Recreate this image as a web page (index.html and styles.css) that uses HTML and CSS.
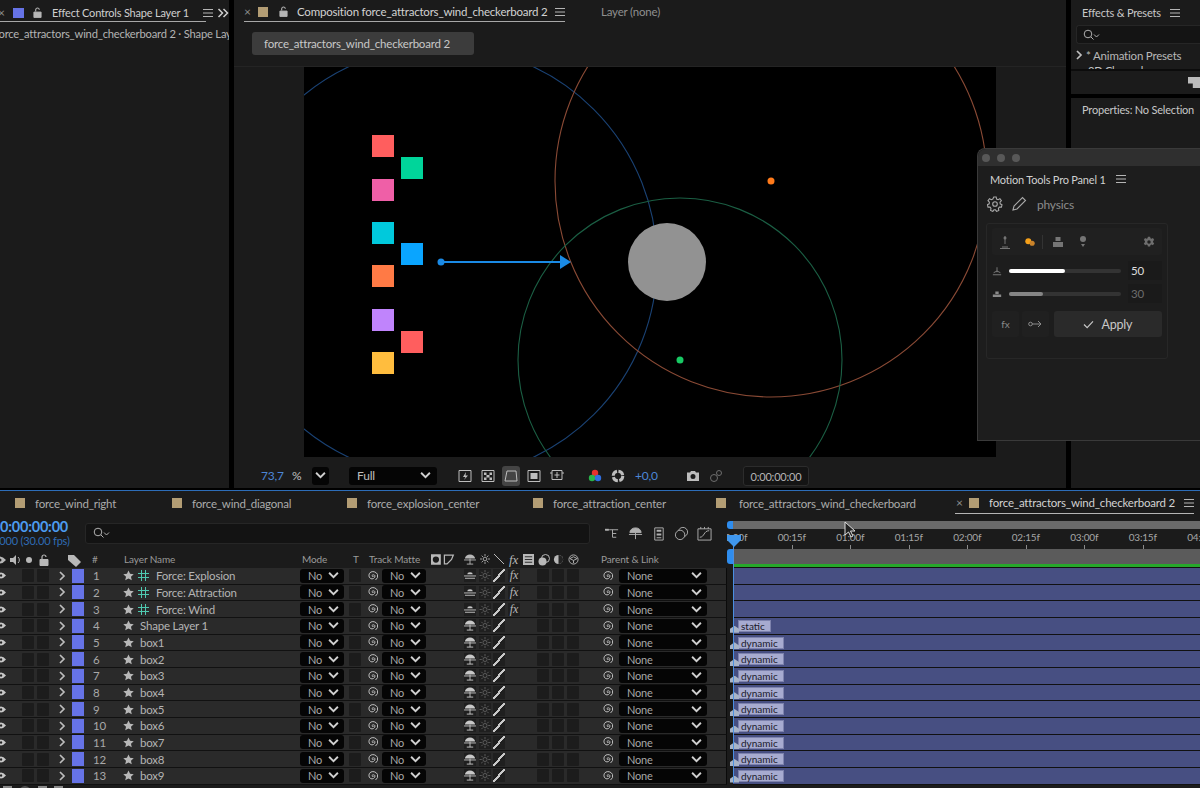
FILE: index.html
```html
<!DOCTYPE html>
<html lang="en">
  <head>
    <meta charset="UTF-8" />
    <title>force_attractors_wind_checkerboard 2</title>
    <link rel="stylesheet" href="styles.css">
  </head>
  <body>
    <svg class="defs" width="0" height="0">
      <symbol id="burger" viewBox="0 0 10 10"><path d="M0 1.500h10M0 5h10M0 8.500h10" stroke="currentColor" fill="none"/></symbol>
      <symbol id="lock" viewBox="0 0 10 12"><path d="M1 5.500h8v6H1z" fill="currentColor" stroke="currentColor"/><path d="M3 5V3a2 2 0 0 1 4 0" fill="none" stroke="currentColor" stroke-width="1.200"/></symbol>
      <symbol id="chev" viewBox="0 0 10 10"><path d="M1 2.500l4 4 4-4" stroke="currentColor" stroke-width="1.700" fill="none"/></symbol>
      <symbol id="chevr" viewBox="0 0 10 10"><path d="M3 1l4 4-4 4" stroke="currentColor" stroke-width="1.700" fill="none"/></symbol>
      <symbol id="dbl" viewBox="0 0 12 10"><path d="M1.500 1l4 4-4 4M6.500 1l4 4-4 4" stroke="currentColor" stroke-width="1.500" fill="none"/></symbol>
      <symbol id="search" viewBox="0 0 18 12"><circle cx="5" cy="5" r="3.800" stroke="currentColor" fill="none"/><path d="M8 8l2.500 2.500M11 5.500l2.500 2.500 2.500-2.500" stroke="currentColor" fill="none"/></symbol>
      <symbol id="eye" viewBox="0 0 12 8"><path d="M0 4q6-7 12 0q-6 7-12 0z" fill="currentColor"/><circle cx="6" cy="4" r="1.500" fill="#222"/></symbol>
      <symbol id="star" viewBox="0 0 12 12"><path d="M6 .5l1.700 3.700 4 .4-3 2.700.9 4L6 9.300 2.400 11.300l.9-4-3-2.700 4-.4z" fill="currentColor"/></symbol>
      <symbol id="hash" viewBox="0 0 11 11"><path d="M3.500 0v11M7.500 0v11M0 3.500h11M0 7.500h11" stroke="currentColor" fill="none"/></symbol>
      <symbol id="spiral" viewBox="0 0 12 12"><path d="M6.500 6.500a1 1 0 0 1-1.500-1a1.800 1.800 0 0 1 3 .3a3 3 0 0 1-4.500 2.700a3.800 3.800 0 0 1 .5-6.500a5 5 0 0 1 6.500 2.500a5 5 0 0 1-2 5.500" stroke="currentColor" fill="none"/></symbol>
      <symbol id="shy" viewBox="0 0 13 12"><path d="M0 6.500h13M6.500 5v6M3 11h7" stroke="currentColor" fill="none"/><path d="M1 5a5.500 4.500 0 0 1 11 0z" fill="currentColor"/></symbol>
      <symbol id="flat" viewBox="0 0 13 12"><path d="M3.500 4.500a3 2 0 0 1 6 0z" fill="currentColor"/><path d="M0 6.500h13M1 9h11" stroke="currentColor" fill="none"/></symbol>
      <symbol id="sun" viewBox="0 0 12 12"><circle cx="6" cy="6" r="2.200" fill="none" stroke="currentColor"/><path d="M6 0v2.500M6 9.500V12M0 6h2.500M9.500 6H12M2 2l1.700 1.700M8.300 8.300L10 10M2 10l1.700-1.700M8.300 3.700L10 2" stroke="currentColor" fill="none"/></symbol>
      <symbol id="gear" viewBox="0 0 16 16"><path d="M6.800 1h2.400l.4 2 1.500.7 1.800-1 1.500 2-1.400 1.500.2 1.600 1.800.9-.6 2.400-2 0-1 1.300.4 2-2.200 1-1.200-1.600H7l-1.200 1.600-2.200-1 .4-2-1-1.300-2 0-.6-2.400 1.800-.9.200-1.600L1 4.700l1.500-2 1.800 1 1.500-.7z" fill="none" stroke="currentColor" stroke-width="1.100"/><circle cx="8" cy="8" r="2.300" fill="none" stroke="currentColor" stroke-width="1.100"/></symbol>
      <symbol id="solid-gear" viewBox="0 0 16 16"><path fill-rule="evenodd" d="M6.500 1h3l.4 2 1.600.8 1.800-1 1.600 2.500-1.500 1.300v1.800l1.500 1.300-1.600 2.500-1.800-1-1.600.8-.4 2h-3l-.4-2-1.600-.8-1.800 1-1.600-2.500 1.500-1.300V6.600L1.100 5.300l1.600-2.500 1.800 1 1.600-.8zM8 5.700a2.300 2.300 0 1 0 0 4.600 2.300 2.300 0 0 0 0-4.600z" fill="currentColor"/></symbol>
    </svg>

    <main class="top">
      <section class="panel left">
        <header class="tab-head left-head">
          <span class="close">×</span>
          <i class="swatch swatch-blue"></i>
          <svg class="lock"><use href="#lock"/></svg>
          <span class="tab-title">Effect Controls Shape Layer 1</span>
          <svg class="burger"><use href="#burger"/></svg>
          <svg class="more"><use href="#dbl"/></svg>
        </header>
        <div class="left-sub">force_attractors_wind_checkerboard 2 · Shape Layer 1</div>
      </section>

      <section class="panel comp">
        <header class="tab-head comp-head">
          <span class="comp-tab">
            <span class="close">×</span>
            <i class="swatch swatch-tan"></i>
            <svg class="lock"><use href="#lock"/></svg>
            <span class="tab-title">Composition force_attractors_wind_checkerboard 2</span>
            <svg class="burger"><use href="#burger"/></svg>
          </span>
          <span class="layer-none">Layer (none)</span>
        </header>
        <div class="pill-row"><span class="pill">force_attractors_wind_checkerboard 2</span></div>
        <div class="viewer">
          <svg class="canvas" viewBox="0 0 692 390" width="692" height="390">
            <circle cx="137" cy="195" r="216" fill="none" stroke="#1a4274" stroke-width="1.100"/>
            <circle cx="467" cy="114" r="216" fill="none" stroke="#8a4a35" stroke-width="1.100"/>
            <circle cx="376" cy="293" r="162" fill="none" stroke="#1b5f44" stroke-width="1.100"/>
            <circle cx="363" cy="195" r="39" fill="#929292"/>
            <path d="M137 195H258" stroke="#1a8ae5" stroke-width="2"/>
            <path d="M256 188l11 7-11 7z" fill="#1a8ae5"/>
            <circle cx="137" cy="195" r="3.500" fill="#1a8ae5"/>
            <circle cx="467" cy="114" r="3.500" fill="#ff7a1a"/>
            <circle cx="376" cy="293" r="3.500" fill="#18c964"/>
            <rect x="68" y="68" width="22" height="22" fill="#ff5e5e"/>
            <rect x="97" y="90" width="22" height="22" fill="#00d59a"/>
            <rect x="68" y="112" width="22" height="22" fill="#ef5fa7"/>
            <rect x="68" y="155" width="22" height="22" fill="#00c9dc"/>
            <rect x="97" y="176" width="22" height="22" fill="#0aa5ff"/>
            <rect x="68" y="198" width="22" height="22" fill="#ff7a45"/>
            <rect x="68" y="242" width="22" height="22" fill="#c084fc"/>
            <rect x="97" y="264" width="22" height="22" fill="#ff5e5e"/>
            <rect x="68" y="285" width="22" height="22" fill="#ffbd3e"/>
          </svg>
        </div>
        <footer class="viewer-bar">
          <span class="zoom-val">73,7</span>
          <span class="zoom-pct">%</span>
          <span class="mini-sel"><svg class="chev"><use href="#chev"/></svg></span>
          <span class="res-sel">Full<svg class="chev"><use href="#chev"/></svg></span>
          <span class="bar-icons">
            <svg class="bar-ic" viewBox="0 0 14 14"><path d="M1 1.500h12v11H1z" fill="none" stroke="currentColor"/><path d="M8 3L5 8h2.500L6 11l4-4.500H7.500z" fill="currentColor"/></svg>
            <svg class="bar-ic" viewBox="0 0 14 14"><path d="M1 1.500h12v11H1z" fill="none" stroke="currentColor"/><path d="M3 3.500h2.500V6H3zM8.500 3.500H11V6H8.500zM5.500 6H8.500v2.500H5.500zM3 8.500h2.500V11H3zM8.500 8.500H11V11H8.500z" fill="currentColor"/></svg>
            <span class="bar-active"><svg class="bar-ic" viewBox="0 0 14 14"><path d="M3 2h9l1 10H1z" fill="none" stroke="currentColor"/></svg></span>
            <svg class="bar-ic" viewBox="0 0 14 14"><path d="M1 1.500h12v11H1z" fill="none" stroke="currentColor"/><path d="M3.500 4h7v6h-7z" fill="currentColor"/></svg>
            <svg class="bar-ic" viewBox="0 0 14 14"><path d="M2 1.500h10v9H2zM7 3v6M4.500 6h5M0 4h2M12 4h2" fill="none" stroke="currentColor"/></svg>
          </span>
          <svg class="rgb" viewBox="0 0 14 14"><circle cx="7" cy="4" r="3.200" fill="#e5322d"/><circle cx="4" cy="9" r="3.200" fill="#29b34a"/><circle cx="10" cy="9" r="3.200" fill="#2f6fe0"/></svg>
          <svg class="bar-ic aperture" viewBox="0 0 14 14"><circle cx="7" cy="7" r="4.800" fill="none" stroke="currentColor" stroke-width="3" stroke-dasharray="6 1.500"/></svg>
          <span class="exposure">+0,0</span>
          <svg class="bar-ic camera" viewBox="0 0 14 14"><path fill-rule="evenodd" d="M1 3.500h3l1-1.500h4l1 1.500h3V12H1zM7 5a2.500 2.500 0 1 0 0 5 2.500 2.500 0 0 0 0-5z" fill="currentColor"/></svg>
          <svg class="bar-ic snapshot" viewBox="0 0 14 14"><circle cx="5" cy="9" r="3.500" fill="none" stroke="currentColor"/><circle cx="10" cy="4" r="2.500" fill="none" stroke="currentColor"/></svg>
          <span class="timecode">0:00:00:00</span>
        </footer>
      </section>

      <aside class="right">
        <section class="panel effects">
          <header class="fx-head">Effects &amp; Presets<svg class="burger"><use href="#burger"/></svg></header>
          <div class="fx-search"><svg class="search-ic"><use href="#search"/></svg></div>
          <div class="fx-item"><svg class="chevr"><use href="#chevr"/></svg>* Animation Presets</div>
          <div class="fx-clip"><span>3D Channel</span></div>
          <div class="fx-foot"><i class="fx-new"></i></div>
        </section>
        <section class="panel props">Properties: No Selection</section>
      </aside>
    </main>

    <aside class="float">
      <div class="float-bar"><i></i><i></i><i></i></div>
      <div class="float-title">Motion Tools Pro Panel 1<svg class="burger"><use href="#burger"/></svg></div>
      <div class="float-tools">
        <svg class="tool-ic"><use href="#gear"/></svg>
        <svg class="tool-ic" viewBox="0 0 16 16"><path d="M2 14l1-4L11.500 1.500l3 3L6 13z" fill="none" stroke="currentColor" stroke-width="1.100"/></svg>
        <span class="physics">physics</span>
      </div>
      <div class="phys-box">
        <div class="phys-bar">
          <svg class="phys-ic" viewBox="0 0 12 14"><path d="M6 1v8M3 12h6M1 13.500h10" stroke="currentColor" fill="none"/><circle cx="6" cy="3" r="1.500" fill="currentColor"/></svg>
          <svg class="phys-ic phys-on" viewBox="0 0 14 14"><circle cx="5" cy="6" r="3.500" fill="#f5a019"/><circle cx="9.500" cy="8.500" r="3" fill="#c9822a"/></svg>
          <i class="phys-sep"></i>
          <svg class="phys-ic" viewBox="0 0 12 14"><path d="M3.500 2h5v4h-5zM1 7h10v5H1z" fill="currentColor"/></svg>
          <svg class="phys-ic" viewBox="0 0 12 14"><circle cx="6" cy="4" r="3" fill="currentColor"/><path d="M4 9h4l-2 3z" fill="currentColor"/></svg>
          <svg class="phys-gear"><use href="#solid-gear"/></svg>
        </div>
        <div class="slider">
          <svg class="slide-ic" viewBox="0 0 12 12"><path d="M6 1.500v6M2 8l4-2 4 2M1 10.500h10" stroke="currentColor" fill="none"/></svg>
          <span class="track"><b class="fill fill-on"></b></span>
          <span class="val">50</span>
        </div>
        <div class="slider slider-off">
          <svg class="slide-ic" viewBox="0 0 12 12"><path d="M4 3h4v3H4zM1 6.500h10v3H1z" fill="currentColor"/></svg>
          <span class="track"><b class="fill fill-off"></b></span>
          <span class="val">30</span>
        </div>
        <div class="phys-actions">
          <span class="act">fx</span>
          <span class="act"><svg class="act-ic" viewBox="0 0 14 10"><circle cx="2.500" cy="5" r="1.800" fill="none" stroke="currentColor"/><path d="M4 5h9M10 2l3 3-3 3" stroke="currentColor" fill="none"/></svg></span>
          <span class="apply"><svg class="apply-ic" viewBox="0 0 12 10"><path d="M1 5l3.500 3.500L11 1.500" stroke="currentColor" stroke-width="1.300" fill="none"/></svg>Apply</span>
        </div>
      </div>
    </aside>

    <section class="timeline">
      <nav class="tl-tabs">
        <span class="tl-tab tab-1"><i class="swatch swatch-tan"></i>force_wind_right</span>
        <span class="tl-tab tab-2"><i class="swatch swatch-tan"></i>force_wind_diagonal</span>
        <span class="tl-tab tab-3"><i class="swatch swatch-tan"></i>force_explosion_center</span>
        <span class="tl-tab tab-4"><i class="swatch swatch-tan"></i>force_attraction_center</span>
        <span class="tl-tab tab-5"><i class="swatch swatch-tan"></i>force_attractors_wind_checkerboard</span>
        <span class="tl-tab tab-on"><span class="close">×</span><i class="swatch swatch-tan"></i>force_attractors_wind_checkerboard 2<svg class="burger"><use href="#burger"/></svg></span>
      </nav>

      <div class="tl-head">
        <div class="tl-head-left">
          <div class="time-row">
            <div class="time-box"><b>0:00:00:00</b><small>00000 (30.00 fps)</small></div>
            <div class="tl-search"><svg class="search-ic"><use href="#search"/></svg></div>
            <div class="time-icons">
              <svg class="time-ic" viewBox="0 0 16 16"><path d="M1 4h4M5 4h9M8 4v8h4M8 8h4" stroke="currentColor" fill="none"/><rect x="0" y="3" width="4" height="2" fill="currentColor"/></svg>
              <svg class="time-ic" viewBox="0 0 16 16"><path d="M2 7a6 5 0 0 1 12 0zM1 9h14M8 7v7" stroke="currentColor" fill="currentColor"/></svg>
              <svg class="time-ic" viewBox="0 0 16 16"><path d="M4 2h9v13H4z" fill="none" stroke="currentColor"/><path d="M6 4h5v2H6zM6 8h5v2H6zM6 12h5v1H6z" fill="currentColor"/></svg>
              <svg class="time-ic" viewBox="0 0 16 16"><circle cx="9.500" cy="6.500" r="5" fill="none" stroke="currentColor"/><circle cx="6.500" cy="9.500" r="5" fill="#1b1b1b" stroke="currentColor"/></svg>
              <svg class="time-ic" viewBox="0 0 16 16"><path d="M1 3h14v12H1zM4 1v2M8 1v2M12 1v2M3 12c5 0 4-7 10-7" fill="none" stroke="currentColor"/></svg>
            </div>
          </div>
          <div class="col-head">
            <svg class="ch-eye"><use href="#eye"/></svg>
            <svg class="ch-spk" viewBox="0 0 12 12"><path d="M1 4h3l3-3v10L4 8H1z" fill="currentColor"/><path d="M9 3a4 4 0 0 1 0 6" stroke="currentColor" fill="none"/></svg>
            <i class="ch-dot"></i>
            <svg class="ch-lock"><use href="#lock"/></svg>
            <svg class="ch-tag" viewBox="0 0 13 13"><path d="M0 1h6l7 7-5 5-8-7z" fill="currentColor"/></svg>
            <span class="ch-num">#</span>
            <span class="ch-name">Layer Name</span>
            <span class="ch-mode">Mode</span>
            <span class="ch-t">T</span>
            <span class="ch-tm">Track Matte</span>
            <svg class="ch-sw" viewBox="0 0 28 12"><path fill-rule="evenodd" d="M0 0h11v12H0zM5.500 2.500a3.500 3.500 0 1 0 0 7 3.500 3.500 0 0 0 0-7z" fill="currentColor"/><path d="M15 1h10l-2 5-5 5h-3z" fill="none" stroke="currentColor" stroke-width="1.400"/></svg>
            <svg class="ch-sw2"><use href="#shy"/></svg>
            <svg class="ch-sw3"><use href="#sun"/></svg>
            <svg class="ch-sw4" viewBox="0 0 10 10"><path d="M0 0l10 10" stroke="currentColor" fill="none"/></svg>
            <em class="ch-fx">fx</em>
            <svg class="ch-sw5" viewBox="0 0 12 12"><path d="M0 0h12v12H0z" fill="currentColor"/><path d="M2 3h8M2 6h8M2 9h8" stroke="#222"/></svg>
            <svg class="ch-sw6" viewBox="0 0 12 12"><circle cx="7.500" cy="4.500" r="4" fill="none" stroke="currentColor"/><circle cx="4.500" cy="7.500" r="4" fill="currentColor"/></svg>
            <svg class="ch-sw7" viewBox="0 0 12 12"><circle cx="6" cy="6" r="5" fill="currentColor"/><path d="M6 1a5 5 0 0 1 0 10z" fill="#222"/></svg>
            <svg class="ch-sw8" viewBox="0 0 12 12"><circle cx="6" cy="6" r="5" fill="none" stroke="currentColor"/><path d="M2 5l4-2 4 2-4 2zM6 7v3" stroke="currentColor" fill="none"/></svg>
            <span class="ch-parent">Parent &amp; Link</span>
          </div>
        </div>
        <div class="tl-head-right">
          <div class="nav-bar"></div>
          <div class="ruler">
            <span>00:00f</span><span>00:15f</span><span>01:00f</span><span>01:15f</span><span>02:00f</span><span>02:15f</span><span>03:00f</span><span>03:15f</span><span>04:00f</span>
          </div>
          <div class="work-bar"></div>
          <div class="green-line"></div>
        </div>
      </div>

      <div class="rows">
        <div class="row">
          <div class="row-left"><svg class="eye"><use href="#eye"/></svg><i class="cell c-a"></i><i class="cell c-b"></i><svg class="tw"><use href="#chevr"/></svg><i class="label"></i><span class="num">1</span><svg class="star"><use href="#star"/></svg><svg class="hash"><use href="#hash"/></svg><span class="name">Force: Explosion</span>
            <span class="sel sel-mode">No<svg class="chev"><use href="#chev"/></svg></span><i class="cell c-t"></i><svg class="spiral s-tm"><use href="#spiral"/></svg><span class="sel sel-tm">No<svg class="chev"><use href="#chev"/></svg></span>
            <i class="sw sw-1"><svg><use href="#flat"/></svg></i><i class="sw dim"><svg><use href="#sun"/></svg></i><i class="sw slash"></i><em class="sw fx">fx</em><i class="cell c-1"></i><i class="cell c-2"></i><i class="cell c-3"></i><svg class="spiral s-par"><use href="#spiral"/></svg><span class="sel sel-par">None<svg class="chev"><use href="#chev"/></svg></span></div>
          <div class="row-bar"></div>
        </div>
        <div class="row">
          <div class="row-left"><svg class="eye"><use href="#eye"/></svg><i class="cell c-a"></i><i class="cell c-b"></i><svg class="tw"><use href="#chevr"/></svg><i class="label"></i><span class="num">2</span><svg class="star"><use href="#star"/></svg><svg class="hash"><use href="#hash"/></svg><span class="name">Force: Attraction</span>
            <span class="sel sel-mode">No<svg class="chev"><use href="#chev"/></svg></span><i class="cell c-t"></i><svg class="spiral s-tm"><use href="#spiral"/></svg><span class="sel sel-tm">No<svg class="chev"><use href="#chev"/></svg></span>
            <i class="sw sw-1"><svg><use href="#flat"/></svg></i><i class="sw dim"><svg><use href="#sun"/></svg></i><i class="sw slash"></i><em class="sw fx">fx</em><i class="cell c-1"></i><i class="cell c-2"></i><i class="cell c-3"></i><svg class="spiral s-par"><use href="#spiral"/></svg><span class="sel sel-par">None<svg class="chev"><use href="#chev"/></svg></span></div>
          <div class="row-bar"></div>
        </div>
        <div class="row">
          <div class="row-left"><svg class="eye"><use href="#eye"/></svg><i class="cell c-a"></i><i class="cell c-b"></i><svg class="tw"><use href="#chevr"/></svg><i class="label"></i><span class="num">3</span><svg class="star"><use href="#star"/></svg><svg class="hash"><use href="#hash"/></svg><span class="name">Force: Wind</span>
            <span class="sel sel-mode">No<svg class="chev"><use href="#chev"/></svg></span><i class="cell c-t"></i><svg class="spiral s-tm"><use href="#spiral"/></svg><span class="sel sel-tm">No<svg class="chev"><use href="#chev"/></svg></span>
            <i class="sw sw-1"><svg><use href="#flat"/></svg></i><i class="sw dim"><svg><use href="#sun"/></svg></i><i class="sw slash"></i><em class="sw fx">fx</em><i class="cell c-1"></i><i class="cell c-2"></i><i class="cell c-3"></i><svg class="spiral s-par"><use href="#spiral"/></svg><span class="sel sel-par">None<svg class="chev"><use href="#chev"/></svg></span></div>
          <div class="row-bar"></div>
        </div>
        <div class="row">
          <div class="row-left"><svg class="eye"><use href="#eye"/></svg><i class="cell c-a"></i><i class="cell c-b"></i><svg class="tw"><use href="#chevr"/></svg><i class="label"></i><span class="num">4</span><svg class="star"><use href="#star"/></svg><span class="name name-plain">Shape Layer 1</span>
            <span class="sel sel-mode">No<svg class="chev"><use href="#chev"/></svg></span><i class="cell c-t"></i><svg class="spiral s-tm"><use href="#spiral"/></svg><span class="sel sel-tm">No<svg class="chev"><use href="#chev"/></svg></span>
            <i class="sw sw-1"><svg><use href="#shy"/></svg></i><i class="sw dim"><svg><use href="#sun"/></svg></i><i class="sw slash"></i><i class="sw none"></i><i class="cell c-1"></i><i class="cell c-2"></i><i class="cell c-3"></i><svg class="spiral s-par"><use href="#spiral"/></svg><span class="sel sel-par">None<svg class="chev"><use href="#chev"/></svg></span></div>
          <div class="row-bar"><span class="marker">static</span><i class="key"></i></div>
        </div>
        <div class="row">
          <div class="row-left"><svg class="eye"><use href="#eye"/></svg><i class="cell c-a"></i><i class="cell c-b"></i><svg class="tw"><use href="#chevr"/></svg><i class="label"></i><span class="num">5</span><svg class="star"><use href="#star"/></svg><span class="name name-plain">box1</span>
            <span class="sel sel-mode">No<svg class="chev"><use href="#chev"/></svg></span><i class="cell c-t"></i><svg class="spiral s-tm"><use href="#spiral"/></svg><span class="sel sel-tm">No<svg class="chev"><use href="#chev"/></svg></span>
            <i class="sw sw-1"><svg><use href="#shy"/></svg></i><i class="sw dim"><svg><use href="#sun"/></svg></i><i class="sw slash"></i><i class="sw none"></i><i class="cell c-1"></i><i class="cell c-2"></i><i class="cell c-3"></i><svg class="spiral s-par"><use href="#spiral"/></svg><span class="sel sel-par">None<svg class="chev"><use href="#chev"/></svg></span></div>
          <div class="row-bar"><span class="marker">dynamic</span><i class="key"></i></div>
        </div>
        <div class="row">
          <div class="row-left"><svg class="eye"><use href="#eye"/></svg><i class="cell c-a"></i><i class="cell c-b"></i><svg class="tw"><use href="#chevr"/></svg><i class="label"></i><span class="num">6</span><svg class="star"><use href="#star"/></svg><span class="name name-plain">box2</span>
            <span class="sel sel-mode">No<svg class="chev"><use href="#chev"/></svg></span><i class="cell c-t"></i><svg class="spiral s-tm"><use href="#spiral"/></svg><span class="sel sel-tm">No<svg class="chev"><use href="#chev"/></svg></span>
            <i class="sw sw-1"><svg><use href="#shy"/></svg></i><i class="sw dim"><svg><use href="#sun"/></svg></i><i class="sw slash"></i><i class="sw none"></i><i class="cell c-1"></i><i class="cell c-2"></i><i class="cell c-3"></i><svg class="spiral s-par"><use href="#spiral"/></svg><span class="sel sel-par">None<svg class="chev"><use href="#chev"/></svg></span></div>
          <div class="row-bar"><span class="marker">dynamic</span><i class="key"></i></div>
        </div>
        <div class="row">
          <div class="row-left"><svg class="eye"><use href="#eye"/></svg><i class="cell c-a"></i><i class="cell c-b"></i><svg class="tw"><use href="#chevr"/></svg><i class="label"></i><span class="num">7</span><svg class="star"><use href="#star"/></svg><span class="name name-plain">box3</span>
            <span class="sel sel-mode">No<svg class="chev"><use href="#chev"/></svg></span><i class="cell c-t"></i><svg class="spiral s-tm"><use href="#spiral"/></svg><span class="sel sel-tm">No<svg class="chev"><use href="#chev"/></svg></span>
            <i class="sw sw-1"><svg><use href="#shy"/></svg></i><i class="sw dim"><svg><use href="#sun"/></svg></i><i class="sw slash"></i><i class="sw none"></i><i class="cell c-1"></i><i class="cell c-2"></i><i class="cell c-3"></i><svg class="spiral s-par"><use href="#spiral"/></svg><span class="sel sel-par">None<svg class="chev"><use href="#chev"/></svg></span></div>
          <div class="row-bar"><span class="marker">dynamic</span><i class="key"></i></div>
        </div>
        <div class="row">
          <div class="row-left"><svg class="eye"><use href="#eye"/></svg><i class="cell c-a"></i><i class="cell c-b"></i><svg class="tw"><use href="#chevr"/></svg><i class="label"></i><span class="num">8</span><svg class="star"><use href="#star"/></svg><span class="name name-plain">box4</span>
            <span class="sel sel-mode">No<svg class="chev"><use href="#chev"/></svg></span><i class="cell c-t"></i><svg class="spiral s-tm"><use href="#spiral"/></svg><span class="sel sel-tm">No<svg class="chev"><use href="#chev"/></svg></span>
            <i class="sw sw-1"><svg><use href="#shy"/></svg></i><i class="sw dim"><svg><use href="#sun"/></svg></i><i class="sw slash"></i><i class="sw none"></i><i class="cell c-1"></i><i class="cell c-2"></i><i class="cell c-3"></i><svg class="spiral s-par"><use href="#spiral"/></svg><span class="sel sel-par">None<svg class="chev"><use href="#chev"/></svg></span></div>
          <div class="row-bar"><span class="marker">dynamic</span><i class="key"></i></div>
        </div>
        <div class="row">
          <div class="row-left"><svg class="eye"><use href="#eye"/></svg><i class="cell c-a"></i><i class="cell c-b"></i><svg class="tw"><use href="#chevr"/></svg><i class="label"></i><span class="num">9</span><svg class="star"><use href="#star"/></svg><span class="name name-plain">box5</span>
            <span class="sel sel-mode">No<svg class="chev"><use href="#chev"/></svg></span><i class="cell c-t"></i><svg class="spiral s-tm"><use href="#spiral"/></svg><span class="sel sel-tm">No<svg class="chev"><use href="#chev"/></svg></span>
            <i class="sw sw-1"><svg><use href="#shy"/></svg></i><i class="sw dim"><svg><use href="#sun"/></svg></i><i class="sw slash"></i><i class="sw none"></i><i class="cell c-1"></i><i class="cell c-2"></i><i class="cell c-3"></i><svg class="spiral s-par"><use href="#spiral"/></svg><span class="sel sel-par">None<svg class="chev"><use href="#chev"/></svg></span></div>
          <div class="row-bar"><span class="marker">dynamic</span><i class="key"></i></div>
        </div>
        <div class="row">
          <div class="row-left"><svg class="eye"><use href="#eye"/></svg><i class="cell c-a"></i><i class="cell c-b"></i><svg class="tw"><use href="#chevr"/></svg><i class="label"></i><span class="num">10</span><svg class="star"><use href="#star"/></svg><span class="name name-plain">box6</span>
            <span class="sel sel-mode">No<svg class="chev"><use href="#chev"/></svg></span><i class="cell c-t"></i><svg class="spiral s-tm"><use href="#spiral"/></svg><span class="sel sel-tm">No<svg class="chev"><use href="#chev"/></svg></span>
            <i class="sw sw-1"><svg><use href="#shy"/></svg></i><i class="sw dim"><svg><use href="#sun"/></svg></i><i class="sw slash"></i><i class="sw none"></i><i class="cell c-1"></i><i class="cell c-2"></i><i class="cell c-3"></i><svg class="spiral s-par"><use href="#spiral"/></svg><span class="sel sel-par">None<svg class="chev"><use href="#chev"/></svg></span></div>
          <div class="row-bar"><span class="marker">dynamic</span><i class="key"></i></div>
        </div>
        <div class="row">
          <div class="row-left"><svg class="eye"><use href="#eye"/></svg><i class="cell c-a"></i><i class="cell c-b"></i><svg class="tw"><use href="#chevr"/></svg><i class="label"></i><span class="num">11</span><svg class="star"><use href="#star"/></svg><span class="name name-plain">box7</span>
            <span class="sel sel-mode">No<svg class="chev"><use href="#chev"/></svg></span><i class="cell c-t"></i><svg class="spiral s-tm"><use href="#spiral"/></svg><span class="sel sel-tm">No<svg class="chev"><use href="#chev"/></svg></span>
            <i class="sw sw-1"><svg><use href="#shy"/></svg></i><i class="sw dim"><svg><use href="#sun"/></svg></i><i class="sw slash"></i><i class="sw none"></i><i class="cell c-1"></i><i class="cell c-2"></i><i class="cell c-3"></i><svg class="spiral s-par"><use href="#spiral"/></svg><span class="sel sel-par">None<svg class="chev"><use href="#chev"/></svg></span></div>
          <div class="row-bar"><span class="marker">dynamic</span><i class="key"></i></div>
        </div>
        <div class="row">
          <div class="row-left"><svg class="eye"><use href="#eye"/></svg><i class="cell c-a"></i><i class="cell c-b"></i><svg class="tw"><use href="#chevr"/></svg><i class="label"></i><span class="num">12</span><svg class="star"><use href="#star"/></svg><span class="name name-plain">box8</span>
            <span class="sel sel-mode">No<svg class="chev"><use href="#chev"/></svg></span><i class="cell c-t"></i><svg class="spiral s-tm"><use href="#spiral"/></svg><span class="sel sel-tm">No<svg class="chev"><use href="#chev"/></svg></span>
            <i class="sw sw-1"><svg><use href="#shy"/></svg></i><i class="sw dim"><svg><use href="#sun"/></svg></i><i class="sw slash"></i><i class="sw none"></i><i class="cell c-1"></i><i class="cell c-2"></i><i class="cell c-3"></i><svg class="spiral s-par"><use href="#spiral"/></svg><span class="sel sel-par">None<svg class="chev"><use href="#chev"/></svg></span></div>
          <div class="row-bar"><span class="marker">dynamic</span><i class="key"></i></div>
        </div>
        <div class="row">
          <div class="row-left"><svg class="eye"><use href="#eye"/></svg><i class="cell c-a"></i><i class="cell c-b"></i><svg class="tw"><use href="#chevr"/></svg><i class="label"></i><span class="num">13</span><svg class="star"><use href="#star"/></svg><span class="name name-plain">box9</span>
            <span class="sel sel-mode">No<svg class="chev"><use href="#chev"/></svg></span><i class="cell c-t"></i><svg class="spiral s-tm"><use href="#spiral"/></svg><span class="sel sel-tm">No<svg class="chev"><use href="#chev"/></svg></span>
            <i class="sw sw-1"><svg><use href="#shy"/></svg></i><i class="sw dim"><svg><use href="#sun"/></svg></i><i class="sw slash"></i><i class="sw none"></i><i class="cell c-1"></i><i class="cell c-2"></i><i class="cell c-3"></i><svg class="spiral s-par"><use href="#spiral"/></svg><span class="sel sel-par">None<svg class="chev"><use href="#chev"/></svg></span></div>
          <div class="row-bar"><span class="marker">dynamic</span><i class="key"></i></div>
        </div>
      </div>

      <div class="tl-foot"><i class="foot-a"></i><i class="foot-b"></i><i class="foot-c"></i><i class="foot-d"></i></div>

      <!-- playhead sits over the ruler and the layer bars -->
      <div class="playhead"><svg class="playhead-top" viewBox="0 0 14 12"><path d="M0 0h14v5l-7 7-7-7z" fill="#3f97ee"/></svg></div>
      <div class="cursor"><svg viewBox="0 0 12 18" width="12" height="18"><path d="M1 1v13l3.500-3 2.500 5 2-1-2.500-5H11z" fill="#222" stroke="#ddd"/></svg></div>
    </section>
  </body>
</html>
```

FILE: styles.css
```css
:root {
  --panel: #1b1b1b;
  --text: #c4c4c4;
  --text-dim: #8c8c8c;
  --blue: #3f8fe6;
  --tan: #b39d74;
  --label: #6673e6;
}

* {
  margin: 0;
  padding: 0;
  box-sizing: border-box;
}

html,
body {
  width: 1200px;
  height: 788px;
  overflow: hidden;
}

body {
  position: relative;
  background-color: #000;
  color: var(--text);
  font-family: Lato, "Liberation Sans", sans-serif;
  font-size: 12px;
  letter-spacing: -0.2px;
}

i,
em {
  display: block;
}

svg {
  display: block;
  flex: none;
}

.defs {
  position: absolute;
}

.top {
  display: flex;
  height: 488px;
}

.panel {
  background-color: var(--panel);
}

.close {
  color: #8e8e8e;
  font-size: 12px;
}

.swatch {
  display: block;
  width: 10px;
  height: 10px;
  flex: none;
}

.swatch-blue {
  background-color: var(--label);
}

.swatch-tan {
  background-color: var(--tan);
}

.lock {
  width: 9px;
  height: 11px;
  color: #b5b5b5;
}

.burger {
  width: 10px;
  height: 10px;
  color: #b5b5b5;
}

.chev {
  width: 11px;
  height: 11px;
  color: #d0d0d0;
}

.chevr {
  width: 10px;
  height: 10px;
  color: #c0c0c0;
}

.search-ic {
  width: 18px;
  height: 12px;
  color: #b0b0b0;
}

/* left panel */

.left {
  flex: none;
  width: 229px;
  overflow: hidden;
}

.tab-head {
  display: flex;
  align-items: center;
  height: 30px;
}

.left-head {
  padding-bottom: 5px;
  position: relative;
}

.left-head::after {
  content: "";
  position: absolute;
  left: 0;
  width: 206px;
  top: 21px;
  height: 1px;
  background-color: #a8a8a8;
}

.left-head .close {
  width: 15px;
  margin-left: -2px;
}

.left-head .swatch {
  width: 11px;
}

.left-head .lock {
  margin-left: 9px;
  margin-right: 10px;
}

.left-head .tab-title {
  width: 146px;
  font-size: 11px;
  color: #cfcfcf;
  white-space: nowrap;
}

.left-head .burger {
  margin-left: 5px;
}

.more {
  width: 12px;
  height: 10px;
  margin-left: 4px;
  color: #cfcfcf;
}

.left-sub {
  margin-left: -5px;
  margin-top: -3px;
  font-size: 11.200px;
  white-space: nowrap;
  color: #b4b4b4;
}

/* composition */

.comp {
  flex: none;
  width: 832px;
  margin-left: 5px;
}

.comp-head {
  align-items: flex-start;
  padding-left: 10px;
  height: 26px;
}

.comp-tab {
  display: flex;
  align-items: center;
  width: 321px;
  height: 22px;
  padding-top: 2px;
  border-bottom: 1px solid #a8a8a8;
}

.comp-tab .close {
  width: 14px;
}

.comp-tab .lock {
  margin-left: 11px;
  margin-right: 9px;
}

.comp-tab .tab-title {
  width: 258px;
  font-size: 11.500px;
  color: #d2d2d2;
  white-space: nowrap;
}

.layer-none {
  margin-left: 36px;
  margin-top: 5px;
  color: #8f8f8f;
  font-size: 11.500px;
}

.pill-row {
  height: 41px;
  padding-top: 6px;
  padding-left: 18px;
  border-bottom: 1px solid #242424;
}

.pill {
  display: block;
  width: 222px;
  height: 23px;
  line-height: 23px;
  padding-left: 12px;
  border-radius: 3px;
  background-color: #3c3c3c;
  color: #c8c8c8;
  font-size: 11.500px;
  white-space: nowrap;
}

.viewer {
  display: flex;
  justify-content: center;
  height: 390px;
}

.canvas {
  background-color: #000;
}

.viewer-bar {
  display: flex;
  align-items: center;
  height: 31px;
  padding-left: 27px;
  padding-top: 6px;
}

.zoom-val {
  color: #4c86d6;
  width: 31px;
}

.zoom-pct {
  width: 20px;
  color: #c0c0c0;
}

.mini-sel {
  display: flex;
  justify-content: center;
  align-items: center;
  width: 17px;
  height: 18px;
  border-radius: 3px;
  background-color: #050505;
}

.res-sel {
  display: flex;
  align-items: center;
  justify-content: space-between;
  width: 88px;
  height: 18px;
  margin-left: 20px;
  padding: 0 6px 0 8px;
  border-radius: 3px;
  background-color: #050505;
  color: #bdbdbd;
}

.bar-icons {
  display: flex;
  align-items: center;
  gap: 9px;
  margin-left: 21px;
}

.bar-ic {
  width: 14px;
  height: 14px;
  color: #bdbdbd;
}

.bar-active {
  display: flex;
  align-items: center;
  justify-content: center;
  width: 18px;
  height: 20px;
  margin: 0 -2px;
  border-radius: 3px;
  background-color: #444;
}

.rgb {
  width: 14px;
  height: 14px;
  margin-left: 24px;
}

.aperture {
  margin-left: 9px;
}

.exposure {
  margin-left: 10px;
  color: #4c86d6;
  width: 31px;
}

.camera {
  margin-left: 20px;
}

.snapshot {
  margin-left: 9px;
  color: #6e6e6e;
}

.timecode {
  margin-left: 20px;
  width: 66px;
  height: 20px;
  line-height: 19px;
  text-align: center;
  border: 1px solid #2c2c2c;
  border-radius: 3px;
  background-color: #141414;
  color: #b5b5b5;
  font-size: 11px;
}

/* right column */

.right {
  flex: 1;
  min-width: 0;
  margin-left: 5px;
}

.effects {
  height: 94px;
  overflow: hidden;
}

.fx-head {
  display: flex;
  align-items: center;
  height: 25px;
  padding-left: 11px;
  color: #c8c8c8;
  font-size: 11px;
}

.fx-head .burger {
  margin-left: 9px;
}

.fx-search {
  display: flex;
  align-items: center;
  height: 19px;
  margin-left: 5px;
  padding-left: 6px;
  border: 1px solid #262626;
  border-right: 0;
  border-radius: 3px 0 0 3px;
  background-color: #141414;
}

.fx-item {
  display: flex;
  align-items: center;
  gap: 2px;
  height: 22px;
  padding-left: 3px;
  color: #b8b8b8;
  font-size: 11.500px;
}

.fx-clip {
  height: 5px;
  overflow: hidden;
  padding-left: 17px;
  line-height: 9px;
  font-size: 11px;
  border-bottom: 2px solid #0c0c0c;
}

.fx-foot {
  display: flex;
  justify-content: flex-end;
  padding-top: 6px;
}

.fx-new {
  width: 12px;
  height: 11px;
  background-color: #bbb;
  clip-path: polygon(0 0, 100% 0, 100% 100%, 40% 100%, 40% 60%, 0 60%);
}

.props {
  height: 390px;
  margin-top: 4px;
  padding: 5px 0 0 11px;
  color: #c8c8c8;
  font-size: 11px;
  white-space: nowrap;
  overflow: hidden;
}

/* floating panel */

.float {
  position: absolute;
  left: 977px;
  top: 148px;
  width: 223px;
  height: 293px;
  border: 1px solid #3a3a3a;
  border-right: 0;
  border-radius: 8px 0 0 0;
  background-color: #1d1d1d;
}

.float-bar {
  display: flex;
  gap: 7px;
  align-items: center;
  height: 17px;
  padding-left: 4px;
  border-radius: 8px 0 0 0;
  background-color: #2f2f2f;
}

.float-bar i {
  width: 8px;
  height: 8px;
  border-radius: 50%;
  background-color: #585858;
}

.float-title {
  display: flex;
  align-items: center;
  gap: 10px;
  height: 26px;
  padding-left: 12px;
  color: #d0d0d0;
  font-size: 11px;
}

.float-tools {
  display: flex;
  align-items: center;
  gap: 8px;
  height: 24px;
  padding-left: 9px;
}

.tool-ic {
  width: 16px;
  height: 16px;
  color: #a8a8a8;
}

.physics {
  margin-left: 2px;
  color: #8c8c8c;
  font-size: 12px;
}

.phys-box {
  width: 182px;
  height: 136px;
  margin: 7px 0 0 8px;
  padding: 4px 5px;
  border: 1px solid #272727;
  border-radius: 3px;
}

.phys-bar {
  display: flex;
  align-items: center;
  height: 27px;
  padding-left: 7px;
  border-radius: 3px;
  background-color: #202020;
}

.phys-ic {
  width: 12px;
  height: 14px;
  color: #757575;
  margin-right: 13px;
}

.phys-on {
  margin-right: 6px;
}

.phys-sep {
  width: 1px;
  height: 14px;
  margin-right: 9px;
  background-color: #333;
}

.phys-gear {
  width: 12px;
  height: 12px;
  margin-left: 41px;
  color: #6e6e6e;
}

.slider {
  display: flex;
  align-items: center;
  height: 23px;
  margin-top: 4px;
}

.slider + .slider {
  margin-top: 0;
}

.slide-ic {
  width: 10px;
  height: 10px;
  color: #8a8a8a;
}

.track {
  width: 112px;
  height: 4px;
  margin-left: 7px;
  border-radius: 2px;
  background-color: #333;
}

.fill {
  display: block;
  height: 100%;
  border-radius: 2px;
}

.fill-on {
  width: 56px;
  background-color: #fff;
}

.fill-off {
  width: 34px;
  background-color: #858585;
}

.val {
  width: 34px;
  margin-left: 7px;
  padding-left: 3px;
  height: 19px;
  line-height: 19px;
  background-color: #1a1a1a;
  color: #dcdcdc;
  font-size: 11.500px;
}

.slider-off .val {
  color: #6c6c6c;
}

.phys-actions {
  display: flex;
  gap: 3px;
  margin-top: 6px;
}

.act {
  display: flex;
  align-items: center;
  justify-content: center;
  width: 27px;
  height: 26px;
  border-radius: 3px;
  background-color: #202020;
  color: #8a8a8a;
  font-size: 10px;
}

.act-ic {
  width: 14px;
  height: 10px;
}

.apply {
  display: flex;
  align-items: center;
  justify-content: center;
  gap: 7px;
  width: 109px;
  height: 26px;
  margin-left: 2px;
  border-radius: 3px;
  background-color: #2a2a2a;
  color: #c8c8c8;
  font-size: 12.500px;
}

.apply-ic {
  width: 11px;
  height: 9px;
}

/* timeline */

.timeline {
  position: relative;
  margin-top: 2px;
  height: 298px;
  border-top: 1px solid #2d6db8;
  background-color: var(--panel);
  overflow: hidden;
}

.tl-tabs {
  display: flex;
  align-items: center;
  height: 26px;
  padding-bottom: 2px;
}

.tl-tab {
  flex: none;
  display: flex;
  align-items: center;
  color: #ababab;
  white-space: nowrap;
  font-size: 11.500px;
}

.tl-tab .swatch {
  margin-right: 10px;
}

.tab-1 {
  width: 157px;
  margin-left: 15px;
}

.tab-2 {
  width: 175px;
}

.tab-3 {
  width: 186px;
}

.tab-4 {
  width: 183px;
}

.tab-5 {
  width: 239px;
}

.tab-5 .swatch {
  margin-right: 13px;
}

.tab-on {
  position: relative;
  height: 22px;
  width: 239px;
  color: #d2d2d2;
  border-bottom: 1px solid #b5b5b5;
}

.tab-on .close {
  width: 14px;
  margin-left: 1px;
}

.tab-on .burger {
  margin-left: 9px;
}

.tl-head {
  display: flex;
  height: 51px;
}

.tl-head-left {
  width: 727px;
  flex: none;
}

.time-row {
  display: flex;
  align-items: center;
  height: 32px;
}

.time-box {
  width: 85px;
  overflow: hidden;
  white-space: nowrap;
}

.time-box b {
  display: block;
  color: #4c9bf0;
  font-size: 14.500px;
  line-height: 15px;
}

.time-box small {
  display: block;
  margin-left: -13px;
  color: #2f6cb5;
  font-size: 11px;
  line-height: 13px;
}

.tl-search {
  display: flex;
  align-items: center;
  width: 505px;
  height: 21px;
  padding-left: 7px;
  border: 1px solid #262626;
  border-radius: 3px;
  background-color: #131313;
}

.time-icons {
  display: flex;
  align-items: center;
  gap: 8px;
  margin-left: 15px;
}

.time-ic {
  width: 15px;
  height: 15px;
  color: #b0b0b0;
}

.col-head {
  position: relative;
  height: 19px;
  color: #9a9a9a;
  font-size: 10px;
  letter-spacing: -0.1px;
  line-height: 21px;
}

/* header glyphs line up with the row columns below, so they hang off one row */
.col-head > * {
  position: absolute;
  top: 0;
}

.col-head svg {
  top: 5px;
  color: #b8b8b8;
}

.col-head .ch-eye {
  left: -6px;
  width: 12px;
  height: 8px;
  top: 7px;
}

.ch-spk {
  left: 9px;
  width: 12px;
  height: 12px;
}

.col-head .ch-dot {
  left: 26px;
  top: 8px;
  width: 6px;
  height: 6px;
  border-radius: 50%;
  background-color: #b8b8b8;
}

.ch-lock {
  left: 39px;
  width: 10px;
  height: 12px;
}

.ch-tag {
  left: 68px;
  width: 13px;
  height: 13px;
}

.ch-num {
  left: 92px;
}

.ch-name {
  left: 124px;
}

.ch-mode {
  left: 302px;
}

.ch-t {
  left: 353px;
}

.ch-tm {
  left: 369px;
}

.ch-sw {
  left: 431px;
  width: 25px;
  height: 11px;
}

.ch-sw2 {
  left: 464px;
  width: 12px;
  height: 11px;
}

.ch-sw3 {
  left: 480px;
  width: 10px;
  height: 10px;
}

.ch-sw4 {
  left: 494px;
  width: 10px;
  height: 10px;
}

.ch-fx {
  left: 509px;
  font-family: "Liberation Serif", serif;
  font-size: 13px;
  color: #b8b8b8;
}

.ch-sw5 {
  left: 523px;
  width: 11px;
  height: 11px;
}

.ch-sw6 {
  left: 538px;
  width: 12px;
  height: 12px;
}

.ch-sw7 {
  left: 553px;
  width: 11px;
  height: 11px;
}

.ch-sw8 {
  left: 568px;
  width: 11px;
  height: 11px;
}

.ch-parent {
  left: 601px;
}

.tl-head-right {
  flex: 1;
  min-width: 0;
  overflow: hidden;
}

.nav-bar {
  position: relative;
  height: 8px;
  margin: 4px 0 0 6px;
  background-color: #6a6a6a;
}

.nav-bar::before,
.work-bar::before {
  content: "";
  position: absolute;
  left: -6px;
  width: 6px;
  top: 0;
  bottom: 0;
  background-color: #2f8dee;
  border-radius: 3px 0 0 3px;
}

.ruler {
  display: flex;
  height: 20px;
  margin-left: -23px;
}

.ruler span {
  position: relative;
  flex: none;
  width: 58.500px;
  padding-top: 2px;
  text-align: center;
  font-size: 10px;
  line-height: 13px;
  color: #a6a6a6;
}

.ruler span::after {
  content: "";
  position: absolute;
  left: 29px;
  bottom: 0;
  width: 1px;
  height: 4px;
  background-color: #8a8a8a;
}

.work-bar {
  position: relative;
  height: 15px;
  margin-left: 6px;
  background-color: #5b5b5b;
}

.green-line {
  height: 4px;
  margin-left: 6px;
  background-color: #27a82b;
  border-bottom: 1px solid #111;
}

.rows {
  display: flex;
  flex-direction: column;
}

.row {
  display: flex;
  flex: none;
  height: 16.670px;
}

.row-left {
  position: relative;
  flex: none;
  width: 727px;
  display: flex;
  align-items: center;
  background-color: #2a2a2a;
  border-bottom: 1px solid #111;
  border-right: 1px solid #0a0a0a;
}

.row-left > * {
  flex: none;
}

.eye {
  width: 10px;
  height: 7px;
  margin-left: -4px;
  color: #c8c8c8;
}

.cell {
  height: 13px;
  background-color: #1c1c1c;
  border-radius: 1px;
}

.c-a {
  width: 12px;
  margin-left: 16px;
}

.c-b {
  width: 12px;
  margin-left: 3px;
}

.tw {
  width: 10px;
  height: 10px;
  margin-left: 8px;
  color: #bdbdbd;
}

.label {
  width: 12px;
  height: 14px;
  margin-left: 5px;
  background-color: var(--label);
}

.num {
  width: 26px;
  padding-left: 9px;
  color: #a8a8a8;
  font-size: 11.500px;
}

.star {
  width: 11px;
  height: 11px;
  margin-left: 13px;
  color: #b8b8b8;
}

.hash {
  width: 11px;
  height: 11px;
  margin-left: 4px;
  color: #4fc9b0;
}

.name {
  width: 144px;
  margin-left: 7px;
  color: #b4b4b4;
  font-size: 11.500px;
  white-space: nowrap;
}

.name-plain {
  width: 160px;
  margin-left: 6px;
}

.sel {
  display: flex;
  align-items: center;
  justify-content: space-between;
  height: 14px;
  border-radius: 3px;
  background-color: #050505;
  color: #a8a8a8;
  font-size: 11px;
  padding: 0 5px 0 8px;
}

.sel-mode {
  width: 44px;
}

.sel-tm {
  width: 44px;
}

.sel-par {
  width: 88px;
  margin-left: 5px;
}

.c-t {
  width: 12px;
  margin-left: 5px;
}

.spiral {
  width: 12px;
  height: 12px;
  color: #bcbcbc;
}

.s-tm {
  margin-left: 6px;
  margin-right: 3px;
}

.s-par {
  margin-left: 23px;
}

.sw {
  display: flex;
  align-items: center;
  justify-content: center;
  width: 12px;
  height: 13px;
  margin-left: 3px;
  background-color: #1f1f1f;
  color: #c8c8c8;
}

.sw-1 {
  margin-left: 38px;
}

.sw svg {
  width: 12px;
  height: 11px;
}

.dim {
  color: #5f5f5f;
}

.slash {
  margin-left: 2px;
  background: linear-gradient(to bottom right, transparent 44%, #c8c8c8 44%, #c8c8c8 56%, transparent 56%) #1f1f1f;
}

.fx {
  font-family: "Liberation Serif", serif;
  font-size: 12px;
  color: #b8b8b8;
}

.none {
  background-color: transparent;
}

.c-1 {
  width: 12px;
  margin-left: 17px;
}

.c-2 {
  width: 12px;
  margin-left: 3px;
}

.c-3 {
  width: 12px;
  margin-left: 3px;
}

.row-bar {
  position: relative;
  flex: 1;
  margin-left: 6px;
  background-color: #474f82;
  border-bottom: 1px solid #111;
}

.marker {
  position: absolute;
  left: 5px;
  top: 2px;
  height: 12px;
  line-height: 10px;
  padding: 0 5px 0 2px;
  background-color: #a7abd0;
  border: 1px solid #7d82ad;
  color: #1a1a2a;
  font-size: 10px;
  letter-spacing: 0;
}

.key {
  position: absolute;
  left: -3px;
  bottom: 1px;
  width: 9px;
  height: 7px;
  background-color: #a8b4c8;
  clip-path: polygon(50% 0, 100% 45%, 100% 100%, 0 100%, 0 45%);
}

.tl-foot {
  display: flex;
  align-items: flex-start;
  gap: 7px;
  padding: 1px 0 0 3px;
}

.tl-foot i {
  width: 9px;
  height: 9px;
  background-color: #8a8a8a;
}

.tl-foot .foot-b {
  border-radius: 50%;
  background-color: #555;
  width: 12px;
  height: 12px;
}

.playhead {
  position: absolute;
  left: 733px;
  top: 44px;
  width: 1px;
  bottom: 5px;
  background-color: #4a8fe0;
}

.playhead-top {
  position: absolute;
  left: -6px;
  top: 0;
  width: 14px;
  height: 12px;
}

.cursor {
  position: absolute;
  left: 844px;
  top: 30px;
}
```
